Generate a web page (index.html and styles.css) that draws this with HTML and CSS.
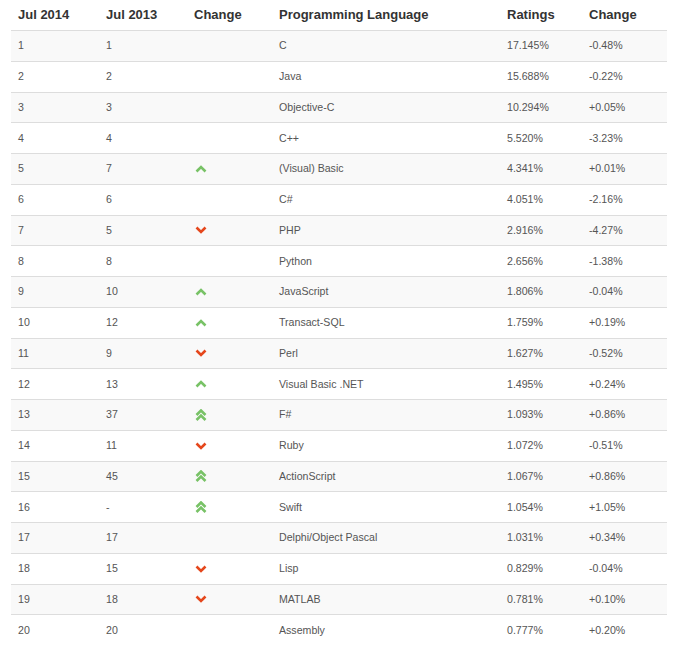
FILE: index.html
```html
<!DOCTYPE html>
<html>
<head>
<meta charset="utf-8">
<link rel="stylesheet" href="styles.css">
</head>
<body>
<div class="tbl">
  <div class="row head">
    <div class="c">Jul 2014</div><div class="c">Jul 2013</div><div class="c">Change</div><div class="c">Programming Language</div><div class="c">Ratings</div><div class="c">Change</div>
  </div>
  <div class="row odd"><div class="c">1</div><div class="c">1</div><div class="c"></div><div class="c">C</div><div class="c">17.145%</div><div class="c">-0.48%</div></div>
  <div class="row"><div class="c">2</div><div class="c">2</div><div class="c"></div><div class="c">Java</div><div class="c">15.688%</div><div class="c">-0.22%</div></div>
  <div class="row odd"><div class="c">3</div><div class="c">3</div><div class="c"></div><div class="c">Objective-C</div><div class="c">10.294%</div><div class="c">+0.05%</div></div>
  <div class="row"><div class="c">4</div><div class="c">4</div><div class="c"></div><div class="c">C++</div><div class="c">5.520%</div><div class="c">-3.23%</div></div>
  <div class="row odd"><div class="c">5</div><div class="c">7</div><div class="c"><svg class="ic up" viewBox="0 0 12 8"><polyline points="1.5,6.5 6,2 10.5,6.5"/></svg></div><div class="c">(Visual) Basic</div><div class="c">4.341%</div><div class="c">+0.01%</div></div>
  <div class="row"><div class="c">6</div><div class="c">6</div><div class="c"></div><div class="c">C#</div><div class="c">4.051%</div><div class="c">-2.16%</div></div>
  <div class="row odd"><div class="c">7</div><div class="c">5</div><div class="c"><svg class="ic down" viewBox="0 0 12 8"><polyline points="1.5,1.5 6,6 10.5,1.5"/></svg></div><div class="c">PHP</div><div class="c">2.916%</div><div class="c">-4.27%</div></div>
  <div class="row"><div class="c">8</div><div class="c">8</div><div class="c"></div><div class="c">Python</div><div class="c">2.656%</div><div class="c">-1.38%</div></div>
  <div class="row odd"><div class="c">9</div><div class="c">10</div><div class="c"><svg class="ic up" viewBox="0 0 12 8"><polyline points="1.5,6.5 6,2 10.5,6.5"/></svg></div><div class="c">JavaScript</div><div class="c">1.806%</div><div class="c">-0.04%</div></div>
  <div class="row"><div class="c">10</div><div class="c">12</div><div class="c"><svg class="ic up" viewBox="0 0 12 8"><polyline points="1.5,6.5 6,2 10.5,6.5"/></svg></div><div class="c">Transact-SQL</div><div class="c">1.759%</div><div class="c">+0.19%</div></div>
  <div class="row odd"><div class="c">11</div><div class="c">9</div><div class="c"><svg class="ic down" viewBox="0 0 12 8"><polyline points="1.5,1.5 6,6 10.5,1.5"/></svg></div><div class="c">Perl</div><div class="c">1.627%</div><div class="c">-0.52%</div></div>
  <div class="row"><div class="c">12</div><div class="c">13</div><div class="c"><svg class="ic up" viewBox="0 0 12 8"><polyline points="1.5,6.5 6,2 10.5,6.5"/></svg></div><div class="c">Visual Basic .NET</div><div class="c">1.495%</div><div class="c">+0.24%</div></div>
  <div class="row odd"><div class="c">13</div><div class="c">37</div><div class="c"><svg class="ic2 up" viewBox="0 0 12 12"><polyline points="1.5,6 6,1.5 10.5,6"/><polyline points="1.5,11 6,6.5 10.5,11"/></svg></div><div class="c">F#</div><div class="c">1.093%</div><div class="c">+0.86%</div></div>
  <div class="row"><div class="c">14</div><div class="c">11</div><div class="c"><svg class="ic down" viewBox="0 0 12 8"><polyline points="1.5,1.5 6,6 10.5,1.5"/></svg></div><div class="c">Ruby</div><div class="c">1.072%</div><div class="c">-0.51%</div></div>
  <div class="row odd"><div class="c">15</div><div class="c">45</div><div class="c"><svg class="ic2 up" viewBox="0 0 12 12"><polyline points="1.5,6 6,1.5 10.5,6"/><polyline points="1.5,11 6,6.5 10.5,11"/></svg></div><div class="c">ActionScript</div><div class="c">1.067%</div><div class="c">+0.86%</div></div>
  <div class="row"><div class="c">16</div><div class="c">-</div><div class="c"><svg class="ic2 up" viewBox="0 0 12 12"><polyline points="1.5,6 6,1.5 10.5,6"/><polyline points="1.5,11 6,6.5 10.5,11"/></svg></div><div class="c">Swift</div><div class="c">1.054%</div><div class="c">+1.05%</div></div>
  <div class="row odd"><div class="c">17</div><div class="c">17</div><div class="c"></div><div class="c">Delphi/Object Pascal</div><div class="c">1.031%</div><div class="c">+0.34%</div></div>
  <div class="row"><div class="c">18</div><div class="c">15</div><div class="c"><svg class="ic down" viewBox="0 0 12 8"><polyline points="1.5,1.5 6,6 10.5,1.5"/></svg></div><div class="c">Lisp</div><div class="c">0.829%</div><div class="c">-0.04%</div></div>
  <div class="row odd"><div class="c">19</div><div class="c">18</div><div class="c"><svg class="ic down" viewBox="0 0 12 8"><polyline points="1.5,1.5 6,6 10.5,1.5"/></svg></div><div class="c">MATLAB</div><div class="c">0.781%</div><div class="c">+0.10%</div></div>
  <div class="row"><div class="c">20</div><div class="c">20</div><div class="c"></div><div class="c">Assembly</div><div class="c">0.777%</div><div class="c">+0.20%</div></div>
</div>
</body>
</html>
```

FILE: styles.css
```css
html, body {
  margin: 0;
  padding: 0;
  background: #fff;
}
body {
  font-family: "Liberation Sans", Arial, sans-serif;
}
.tbl {
  margin-left: 11px;
  width: 656px;
}
.row {
  display: grid;
  grid-template-columns: 88px 88px 85px 228px 82px 85px;
  height: 30.75px;
  box-sizing: border-box;
  border-top: 1px solid #dddddd;
  font-size: 10.6px;
  color: #555555;
  align-items: center;
  padding-bottom: 1px;
}
.row.odd {
  background: #f9f9f9;
}
.row.head {
  height: 30px;
  border-top: none;
  font-size: 13px;
  font-weight: bold;
  color: #333333;
}
.c {
  padding-left: 7px;
  display: flex;
  align-items: center;
}
.ic {
  width: 12px;
  height: 8px;
  margin-left: 1px;
  margin-top: 1px;
}
.ic2 {
  width: 12px;
  height: 12px;
  margin-left: 1px;
  margin-top: 1px;
}
.ic polyline, .ic2 polyline {
  fill: none;
  stroke-width: 2.6;
  stroke-linecap: butt;
  stroke-linejoin: miter;
}
.up polyline {
  stroke: #78c266;
}
.down polyline {
  stroke: #e5471c;
}
```
